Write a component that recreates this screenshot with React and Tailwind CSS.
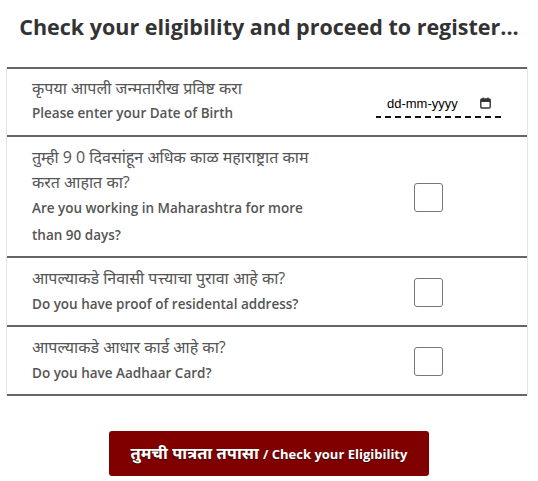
export default function App() {
  const rows = [
    {
      mr: ['तुम्ही 9 0 दिवसांहून अधिक काळ महाराष्ट्रात काम', 'करत आहात का?'],
      en: ['Are you working in Maharashtra for more', 'than 90 days?'],
    },
    {
      mr: ['आपल्याकडे निवासी पत्त्याचा पुरावा आहे का?'],
      en: ['Do you have proof of residental address?'],
    },
    {
      mr: ['आपल्याकडे आधार कार्ड आहे का?'],
      en: ['Do you have Aadhaar Card?'],
    },
  ];

  return (
    <div className="min-h-screen bg-white font-['Open_Sans','Noto_Sans',sans-serif] text-[#555]">
      <h1 className="pt-[12px] text-center text-[21.5px] font-bold leading-[30px] text-[#333]">
        Check your eligibility and proceed to register...
      </h1>

      <div className="mx-[6px] mt-[25px] w-[522px] border-x border-[#e5e5e5]">
        <div className="flex h-[70px] border-y-2 border-[#666]">
          <div className="flex-1 pl-[25px] pt-[6px]">
            <p className="text-[16px] leading-[26px]">कृपया आपली जन्मतारीख प्रविष्ट करा</p>
            <p className="text-[13.5px] font-semibold leading-[24px]">Please enter your Date of Birth</p>
          </div>
          <div className="flex w-[170px] items-center pl-[19px] pt-[4px]">
            <div className="flex h-[28px] w-[128px] items-center justify-between bg-[linear-gradient(to_right,#111_60%,transparent_0)] bg-[length:10px_2px] bg-bottom bg-repeat-x pl-[11px] pr-[13px] text-[13px] text-black">
              <span className="font-['Liberation_Sans',sans-serif]">dd-mm-yyyy</span>
              <svg width="11" height="12" viewBox="0 0 11 12" className="mt-[-2px]">
                <rect x="0.8" y="2" width="9.4" height="9" rx="1.2" fill="none" stroke="#333" strokeWidth="1.4" />
                <rect x="0.8" y="2" width="9.4" height="3" fill="#333" />
                <rect x="2.5" y="0.5" width="1.2" height="2" fill="#333" />
                <rect x="7.3" y="0.5" width="1.2" height="2" fill="#333" />
              </svg>
            </div>
          </div>
        </div>

        {rows.map((r, i) => (
          <div key={i} className="flex border-b-2 border-[#666] pt-[8px] pb-[7px]">
            <div className="flex-1 pl-[25px]">
              {r.mr.map((t) => (
                <p key={t} className="text-[16px] leading-[25px]">{t}</p>
              ))}
              {r.en.map((t) => (
                <p key={t} className="text-[13.5px] font-semibold leading-[27px]">{t}</p>
              ))}
            </div>
            <div className="flex w-[170px] items-center pl-[57px]">
              <div className="h-[29px] w-[29px] rounded-[3px] border border-[#777] bg-white" />
            </div>
          </div>
        ))}
      </div>

      <div className="mt-[35px] flex justify-center">
        <button className="h-[45px] w-[320px] rounded-[3px] bg-[#800000] text-[16.5px] font-bold text-white [text-shadow:0_1px_1px_rgba(0,0,0,0.6)]">
          तुमची पात्रता तपासा <span className="text-[13px]">/ Check your Eligibility</span>
        </button>
      </div>
    </div>
  );
}
